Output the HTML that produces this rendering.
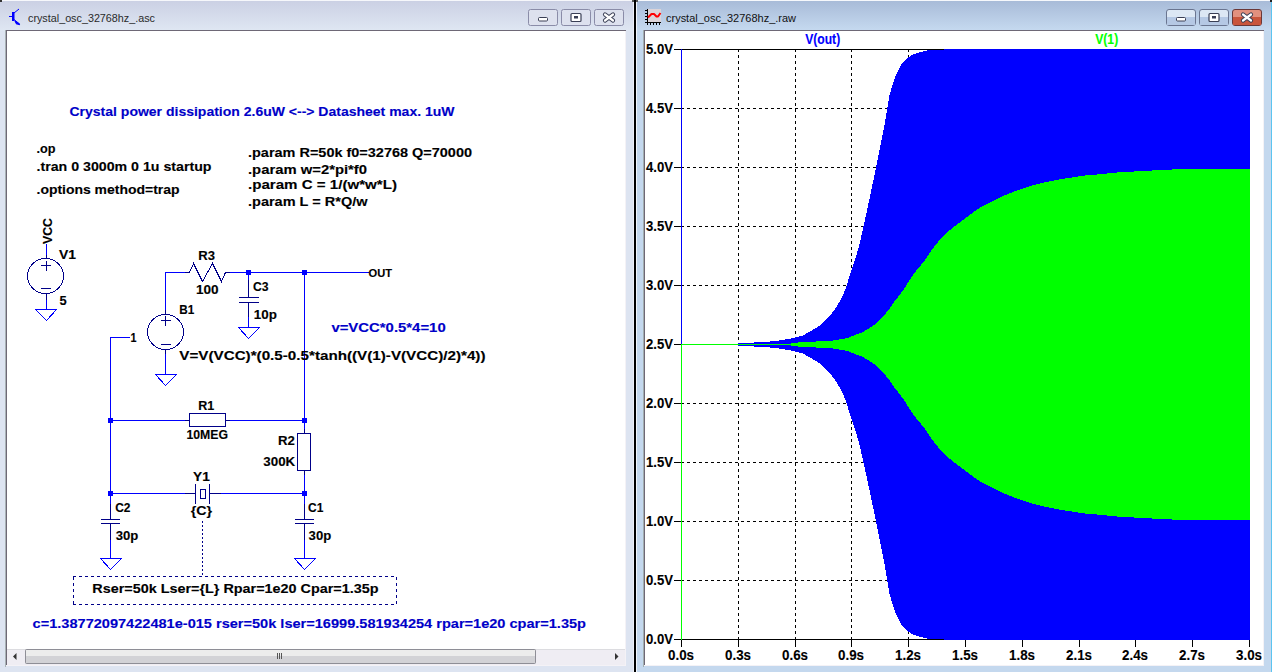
<!DOCTYPE html>
<html><head><meta charset="utf-8"><title>LTspice</title>
<style>html,body{margin:0;padding:0;width:1272px;height:672px;overflow:hidden;background:#d8deee;}
svg{display:block;}</style></head>
<body><svg width="1272" height="672" viewBox="0 0 1272 672">
<defs><linearGradient id="lg" x1="0" y1="0" x2="0" y2="1"><stop offset="0" stop-color="#cbd0e4"/><stop offset="1" stop-color="#dfe7f3"/></linearGradient><linearGradient id="rg" x1="0" y1="0" x2="0" y2="1"><stop offset="0" stop-color="#a8bbd8"/><stop offset="1" stop-color="#c6daf0"/></linearGradient></defs>
<rect x="0" y="0" width="634" height="672" fill="#dde4f1" />
<rect x="0" y="1" width="634" height="30" fill="url(#lg)" />
<rect x="0" y="0" width="634" height="1" fill="#f6f7fb" />
<rect x="0" y="0" width="2" height="2" fill="#333" />
<rect x="632" y="0" width="2" height="2" fill="#555" />
<rect x="634" y="0" width="2" height="672" fill="#000" />
<rect x="636" y="0" width="636" height="672" fill="#c4d8ee" />
<rect x="636" y="1" width="636" height="30" fill="url(#rg)" />
<rect x="636" y="0" width="636" height="1" fill="#f6f8fc" />
<rect x="636" y="0" width="2" height="2" fill="#555" />
<rect x="1270" y="0" width="2" height="2" fill="#222" />
<rect x="1271" y="2" width="1" height="670" fill="#5cc4f0" />
<rect x="636" y="2" width="1" height="670" fill="#f2f6fc" />
<rect x="5" y="30" width="1" height="637" fill="#a9b3b6" />
<rect x="643" y="30" width="1" height="637" fill="#a2aeb0" />
<rect x="6" y="30" width="620" height="1" fill="#6e6876" />
<rect x="6" y="30" width="1" height="636" fill="#6e6876" />
<rect x="7" y="31" width="618" height="618" fill="#fff" />
<rect x="625" y="31" width="1" height="635" fill="#f4f2f6" />
<rect x="6" y="665" width="620" height="1" fill="#f4f2f6" />
<rect x="633" y="2" width="1" height="670" fill="#eef0f8" />
<rect x="7" y="649" width="618" height="16" fill="#efedf3" />
<rect x="7" y="649" width="618" height="1" fill="#dcdce0" />
<rect x="25" y="649" width="511" height="15" fill="#8e8e96" rx="2"/>
<rect x="26" y="650" width="509" height="6" fill="#ececec" />
<rect x="26" y="656" width="509" height="7" fill="#d2d2d6" />
<rect x="277" y="653" width="1" height="6" fill="#555" />
<rect x="279" y="653" width="1" height="6" fill="#555" />
<rect x="281" y="653" width="1" height="6" fill="#555" />
<path d="M13 656.5 L16.5 653 L16.5 660 Z" fill="#333"/>
<path d="M615 653 L618.5 656.5 L615 660 Z" fill="#333"/>
<rect x="644" y="30" width="620" height="1" fill="#6e6876" />
<rect x="644" y="30" width="1" height="636" fill="#6e6876" />
<rect x="645" y="31" width="618" height="634" fill="#fff" />
<rect x="1263" y="31" width="1" height="635" fill="#f4f2f6" />
<rect x="644" y="665" width="620" height="1" fill="#f4f2f6" />
<text x="28" y="21.6" font-size="10.8" font-weight="normal" fill="#2a2a2a" font-family='"Liberation Sans", sans-serif' textLength="127" lengthAdjust="spacingAndGlyphs" word-spacing="0" letter-spacing="0" >crystal_osc_32768hz_.asc</text>
<text x="666" y="21.6" font-size="10.8" font-weight="normal" fill="#111" font-family='"Liberation Sans", sans-serif' textLength="130" lengthAdjust="spacingAndGlyphs" word-spacing="0" letter-spacing="0" >crystal_osc_32768hz_.raw</text>
<rect x="528.5" y="9.5" width="29" height="16" rx="2" fill="#dde1ee" stroke="#8a8ca8" stroke-width="1"/>
<rect x="561.5" y="9.5" width="29" height="16" rx="2" fill="#dde1ee" stroke="#8a8ca8" stroke-width="1"/>
<rect x="594.5" y="9.5" width="29" height="16" rx="2" fill="#dde1ee" stroke="#8a8ca8" stroke-width="1"/>
<rect x="538.5" y="17.5" width="9" height="3.5" fill="#fff" stroke="#3a3f55" rx="1"/>
<rect x="571" y="13.5" width="10" height="8" fill="#fff" stroke="#3a3f55" stroke-width="1.2" rx="1"/>
<rect x="574" y="16" width="4" height="2.5" fill="#3a3f55"/>
<path d="M605 14.5 L613 20.5 M613 14.5 L605 20.5" stroke="#3a3f55" stroke-width="4.2" stroke-linecap="round"/>
<path d="M605 14.5 L613 20.5 M613 14.5 L605 20.5" stroke="#fff" stroke-width="2.2" stroke-linecap="round"/>
<rect x="1166.5" y="9.5" width="29" height="16" rx="2.5" fill="#dce7f4" stroke="#6a7590" stroke-width="1"/>
<rect x="1167" y="17" width="28" height="8" fill="#b5c8e4"/>
<rect x="1199.5" y="9.5" width="29" height="16" rx="2.5" fill="#dce7f4" stroke="#6a7590" stroke-width="1"/>
<rect x="1200" y="17" width="28" height="8" fill="#b5c8e4"/>
<rect x="1232.5" y="9.5" width="29" height="16" rx="2.5" fill="#e2907e" stroke="#6a3838" stroke-width="1"/>
<rect x="1233" y="17" width="28" height="8" fill="#c9553c"/>
<rect x="1176.5" y="17.5" width="9" height="3.5" fill="#fff" stroke="#3a3f55" rx="1"/>
<rect x="1209" y="13.5" width="10" height="8" fill="#fff" stroke="#3a3f55" stroke-width="1.2" rx="1"/>
<rect x="1212" y="16" width="4" height="2.5" fill="#3a3f55"/>
<path d="M1243 14.5 L1251 20.5 M1251 14.5 L1243 20.5" stroke="#3a3f55" stroke-width="4.2" stroke-linecap="round"/>
<path d="M1243 14.5 L1251 20.5 M1251 14.5 L1243 20.5" stroke="#fff" stroke-width="2.2" stroke-linecap="round"/>
<g fill="#0000ff"><rect x="9" y="16" width="4" height="1"/><rect x="12" y="12" width="2.5" height="9"/></g>
<path d="M14 13 L19 9 M14 19.5 L19.5 24" stroke="#0000ff" stroke-width="1" fill="none"/>
<path d="M15 21 L19.8 24.6 L16.5 23.8 Z" stroke="#0000ff" stroke-width="1.2" fill="#0000ff"/>
<rect x="648" y="9" width="13" height="13" fill="#dcd4d8"/>
<g fill="#000"><rect x="647" y="9" width="1" height="15"/><rect x="645" y="22" width="16" height="1"/><rect x="645" y="10" width="2" height="1"/><rect x="645" y="13" width="2" height="1"/><rect x="645" y="16" width="2" height="1"/><rect x="645" y="19" width="2" height="1"/><rect x="647" y="23" width="1" height="2"/><rect x="650" y="23" width="1" height="2"/><rect x="653" y="23" width="1" height="2"/><rect x="656" y="23" width="1" height="2"/><rect x="659" y="23" width="1" height="2"/></g>
<path d="M648 17.5 L651.5 14 L654 14 L656.5 16.5 L658 16.5 L660.5 13" stroke="#f00" stroke-width="2" fill="none" stroke-linejoin="round"/>
<g>
<rect x="46" y="244" width="1" height="11" fill="#0000ff"/>
<rect x="46" y="255" width="1" height="4" fill="#000088"/>
<ellipse cx="45.5" cy="276" rx="18" ry="17.5" stroke="#000088" stroke-width="1" fill="none" shape-rendering="crispEdges"/>
<rect x="41" y="265" width="10" height="1" fill="#000088"/>
<rect x="46" y="261" width="1" height="10" fill="#000088"/>
<rect x="41" y="288" width="10" height="1" fill="#000088"/>
<rect x="46" y="294" width="1" height="6" fill="#000088"/>
<rect x="46" y="300" width="1" height="10" fill="#0000ff"/>
<rect x="35" y="309" width="22" height="1" fill="#0000ff"/>
<path d="M35.5 309.5 L46.5 320.5 L56.5 309.5" stroke="#0000ff" stroke-width="1" fill="none" shape-rendering="crispEdges"/>
<text x="0" y="0" font-size="12" font-weight="bold" fill="#000" stroke="#000" stroke-width="0.12" font-family='"Liberation Sans", sans-serif' textLength="26" lengthAdjust="spacingAndGlyphs" word-spacing="0" letter-spacing="0" transform="translate(51.6 244) rotate(-90)">VCC</text>
<text x="59" y="259" font-size="12" font-weight="bold" fill="#000" stroke="#000" stroke-width="0.12" font-family='"Liberation Sans", sans-serif' textLength="17" lengthAdjust="spacingAndGlyphs" word-spacing="0" letter-spacing="0" >V1</text>
<text x="59.6" y="304.6" font-size="12" font-weight="bold" fill="#000" stroke="#000" stroke-width="0.12" font-family='"Liberation Sans", sans-serif' textLength="7.2" lengthAdjust="spacingAndGlyphs" word-spacing="0" letter-spacing="0" >5</text>
<rect x="165" y="272" width="1" height="38" fill="#0000ff"/>
<rect x="165" y="310" width="1" height="4" fill="#000088"/>
<rect x="165" y="272" width="20" height="1" fill="#0000ff"/>
<rect x="185" y="272" width="5" height="1" fill="#000088"/>
<path d="M189.5 272.5 L193.5 263.5 L202.5 281.5 L212.5 263.5 L221.5 281.5 L225.5 272.5" stroke="#000088" stroke-width="1" fill="none" shape-rendering="crispEdges"/>
<rect x="225" y="272" width="5" height="1" fill="#000088"/>
<rect x="230" y="272" width="139" height="1" fill="#0000ff"/>
<rect x="246" y="270" width="5" height="5" fill="#0000ff"/>
<rect x="302" y="270" width="5" height="5" fill="#0000ff"/>
<rect x="248" y="272" width="1" height="8" fill="#0000ff"/>
<rect x="248" y="280" width="1" height="18" fill="#000088"/>
<rect x="239" y="297" width="20" height="1" fill="#000088"/>
<rect x="239" y="302" width="20" height="1" fill="#000088"/>
<rect x="248" y="302" width="1" height="15" fill="#000088"/>
<rect x="248" y="317" width="1" height="11" fill="#0000ff"/>
<rect x="238" y="327" width="22" height="1" fill="#0000ff"/>
<path d="M238.5 327.5 L248.5 338.5 L259.5 327.5" stroke="#0000ff" stroke-width="1" fill="none" shape-rendering="crispEdges"/>
<ellipse cx="165.5" cy="332" rx="18" ry="17.5" stroke="#000088" stroke-width="1" fill="none" shape-rendering="crispEdges"/>
<rect x="161" y="320" width="10" height="1" fill="#000088"/>
<rect x="165" y="316" width="1" height="10" fill="#000088"/>
<rect x="161" y="344" width="10" height="1" fill="#000088"/>
<rect x="165" y="350" width="1" height="4" fill="#000088"/>
<rect x="165" y="354" width="1" height="21" fill="#0000ff"/>
<rect x="155" y="374" width="22" height="1" fill="#0000ff"/>
<path d="M155.5 374.5 L165.5 385.5 L176.5 374.5" stroke="#0000ff" stroke-width="1" fill="none" shape-rendering="crispEdges"/>
<rect x="304" y="272" width="1" height="157" fill="#0000ff"/>
<rect x="304" y="429" width="1" height="5" fill="#000088"/>
<rect x="297" y="433" width="14" height="1" fill="#000088"/>
<rect x="297" y="470" width="14" height="1" fill="#000088"/>
<rect x="297" y="433" width="1" height="38" fill="#000088"/>
<rect x="310" y="433" width="1" height="38" fill="#000088"/>
<rect x="304" y="470" width="1" height="5" fill="#000088"/>
<rect x="304" y="475" width="1" height="19" fill="#0000ff"/>
<rect x="110" y="337" width="20" height="1" fill="#0000ff"/>
<rect x="110" y="337" width="1" height="157" fill="#0000ff"/>
<rect x="110" y="420" width="75" height="1" fill="#0000ff"/>
<rect x="185" y="420" width="5" height="1" fill="#000088"/>
<rect x="189" y="413" width="37" height="1" fill="#000088"/>
<rect x="189" y="426" width="37" height="1" fill="#000088"/>
<rect x="189" y="413" width="1" height="14" fill="#000088"/>
<rect x="225" y="413" width="1" height="14" fill="#000088"/>
<rect x="226" y="420" width="4" height="1" fill="#000088"/>
<rect x="230" y="420" width="75" height="1" fill="#0000ff"/>
<rect x="108" y="418" width="5" height="5" fill="#0000ff"/>
<rect x="302" y="418" width="5" height="5" fill="#0000ff"/>
<rect x="110" y="493" width="75" height="1" fill="#0000ff"/>
<rect x="185" y="493" width="11" height="1" fill="#000088"/>
<rect x="195" y="484" width="1" height="20" fill="#000088"/>
<rect x="209" y="484" width="1" height="20" fill="#000088"/>
<rect x="200" y="489" width="6" height="1" fill="#000088"/>
<rect x="200" y="498" width="6" height="1" fill="#000088"/>
<rect x="200" y="489" width="1" height="10" fill="#000088"/>
<rect x="205" y="489" width="1" height="10" fill="#000088"/>
<rect x="210" y="493" width="11" height="1" fill="#000088"/>
<rect x="221" y="493" width="84" height="1" fill="#0000ff"/>
<rect x="108" y="491" width="5" height="5" fill="#0000ff"/>
<rect x="302" y="491" width="5" height="5" fill="#0000ff"/>
<rect x="110" y="493" width="1" height="11" fill="#0000ff"/>
<rect x="110" y="504" width="1" height="16" fill="#000088"/>
<rect x="101" y="519" width="19" height="1" fill="#000088"/>
<rect x="101" y="523" width="19" height="1" fill="#000088"/>
<rect x="110" y="523" width="1" height="17" fill="#000088"/>
<rect x="110" y="540" width="1" height="19" fill="#0000ff"/>
<rect x="100" y="558" width="22" height="1" fill="#0000ff"/>
<path d="M100.5 558.5 L110.5 569.5 L121.5 558.5" stroke="#0000ff" stroke-width="1" fill="none" shape-rendering="crispEdges"/>
<rect x="304" y="493" width="1" height="11" fill="#0000ff"/>
<rect x="304" y="504" width="1" height="16" fill="#000088"/>
<rect x="295" y="519" width="19" height="1" fill="#000088"/>
<rect x="295" y="523" width="19" height="1" fill="#000088"/>
<rect x="304" y="523" width="1" height="17" fill="#000088"/>
<rect x="304" y="540" width="1" height="19" fill="#0000ff"/>
<rect x="294" y="558" width="22" height="1" fill="#0000ff"/>
<path d="M294.5 558.5 L304.5 569.5 L315.5 558.5" stroke="#0000ff" stroke-width="1" fill="none" shape-rendering="crispEdges"/>
<path d="M202.5 521 V577" stroke="#000088" stroke-width="1" stroke-dasharray="2 2" shape-rendering="crispEdges"/>
<path d="M73 576.5 H397 M73 604.5 H397 M73.5 577 V605 M396.5 577 V605" stroke="#000088" stroke-width="1" fill="none" stroke-dasharray="3 3" shape-rendering="crispEdges"/>
<text x="69.5" y="115.7" font-size="12" font-weight="bold" fill="#0000c8" stroke="#0000c8" stroke-width="0.12" font-family='"Liberation Sans", sans-serif' textLength="385" lengthAdjust="spacingAndGlyphs" word-spacing="0" letter-spacing="0" >Crystal power dissipation 2.6uW &lt;--&gt; Datasheet max. 1uW</text>
<text x="36.5" y="153.4" font-size="12" font-weight="bold" fill="#000" stroke="#000" stroke-width="0.12" font-family='"Liberation Sans", sans-serif' textLength="19" lengthAdjust="spacingAndGlyphs" word-spacing="0" letter-spacing="0" >.op</text>
<text x="36.5" y="171.1" font-size="12" font-weight="bold" fill="#000" stroke="#000" stroke-width="0.12" font-family='"Liberation Sans", sans-serif' textLength="175" lengthAdjust="spacingAndGlyphs" word-spacing="0" letter-spacing="0" >.tran 0 3000m 0 1u startup</text>
<text x="36.5" y="193.8" font-size="12" font-weight="bold" fill="#000" stroke="#000" stroke-width="0.12" font-family='"Liberation Sans", sans-serif' textLength="143" lengthAdjust="spacingAndGlyphs" word-spacing="0" letter-spacing="0" >.options method=trap</text>
<text x="248" y="157" font-size="12" font-weight="bold" fill="#000" stroke="#000" stroke-width="0.12" font-family='"Liberation Sans", sans-serif' textLength="224" lengthAdjust="spacingAndGlyphs" word-spacing="0" letter-spacing="0" >.param R=50k f0=32768 Q=70000</text>
<text x="248" y="173.5" font-size="12" font-weight="bold" fill="#000" stroke="#000" stroke-width="0.12" font-family='"Liberation Sans", sans-serif' textLength="119" lengthAdjust="spacingAndGlyphs" word-spacing="0" letter-spacing="0" >.param w=2*pi*f0</text>
<text x="248" y="189.2" font-size="12" font-weight="bold" fill="#000" stroke="#000" stroke-width="0.12" font-family='"Liberation Sans", sans-serif' textLength="149" lengthAdjust="spacingAndGlyphs" word-spacing="0" letter-spacing="0" >.param C = 1/(w*w*L)</text>
<text x="248" y="205.9" font-size="12" font-weight="bold" fill="#000" stroke="#000" stroke-width="0.12" font-family='"Liberation Sans", sans-serif' textLength="119.5" lengthAdjust="spacingAndGlyphs" word-spacing="0" letter-spacing="0" >.param L = R*Q/w</text>
<text x="198.3" y="260.2" font-size="12" font-weight="bold" fill="#000" stroke="#000" stroke-width="0.12" font-family='"Liberation Sans", sans-serif' textLength="16.7" lengthAdjust="spacingAndGlyphs" word-spacing="0" letter-spacing="0" >R3</text>
<text x="196" y="293.6" font-size="12" font-weight="bold" fill="#000" stroke="#000" stroke-width="0.12" font-family='"Liberation Sans", sans-serif' textLength="22.6" lengthAdjust="spacingAndGlyphs" word-spacing="0" letter-spacing="0" >100</text>
<text x="253" y="291.2" font-size="12" font-weight="bold" fill="#000" stroke="#000" stroke-width="0.12" font-family='"Liberation Sans", sans-serif' textLength="15.6" lengthAdjust="spacingAndGlyphs" word-spacing="0" letter-spacing="0" >C3</text>
<text x="253.8" y="319" font-size="12" font-weight="bold" fill="#000" stroke="#000" stroke-width="0.12" font-family='"Liberation Sans", sans-serif' textLength="23.1" lengthAdjust="spacingAndGlyphs" word-spacing="0" letter-spacing="0" >10p</text>
<text x="179.3" y="313.8" font-size="12" font-weight="bold" fill="#000" stroke="#000" stroke-width="0.12" font-family='"Liberation Sans", sans-serif' textLength="15" lengthAdjust="spacingAndGlyphs" word-spacing="0" letter-spacing="0" >B1</text>
<text x="179.3" y="360.4" font-size="12" font-weight="bold" fill="#000" stroke="#000" stroke-width="0.12" font-family='"Liberation Sans", sans-serif' textLength="306.2" lengthAdjust="spacingAndGlyphs" word-spacing="0" letter-spacing="0" >V=V(VCC)*(0.5-0.5*tanh((V(1)-V(VCC)/2)*4))</text>
<text x="368.6" y="276.8" font-size="11" font-weight="bold" fill="#000" stroke="#000" stroke-width="0.12" font-family='"Liberation Sans", sans-serif' textLength="23.5" lengthAdjust="spacingAndGlyphs" word-spacing="0" letter-spacing="0" >OUT</text>
<text x="331.4" y="331.8" font-size="12" font-weight="bold" fill="#0000c8" stroke="#0000c8" stroke-width="0.12" font-family='"Liberation Sans", sans-serif' textLength="114.3" lengthAdjust="spacingAndGlyphs" word-spacing="0" letter-spacing="0" >v=VCC*0.5*4=10</text>
<text x="130.5" y="341.9" font-size="12" font-weight="bold" fill="#000" stroke="#000" stroke-width="0.12" font-family='"Liberation Sans", sans-serif' textLength="6" lengthAdjust="spacingAndGlyphs" word-spacing="0" letter-spacing="0" >1</text>
<text x="198.3" y="409.8" font-size="12" font-weight="bold" fill="#000" stroke="#000" stroke-width="0.12" font-family='"Liberation Sans", sans-serif' textLength="16" lengthAdjust="spacingAndGlyphs" word-spacing="0" letter-spacing="0" >R1</text>
<text x="186.4" y="439" font-size="12" font-weight="bold" fill="#000" stroke="#000" stroke-width="0.12" font-family='"Liberation Sans", sans-serif' textLength="41.6" lengthAdjust="spacingAndGlyphs" word-spacing="0" letter-spacing="0" >10MEG</text>
<text x="278" y="445" font-size="12" font-weight="bold" fill="#000" stroke="#000" stroke-width="0.12" font-family='"Liberation Sans", sans-serif' textLength="16.8" lengthAdjust="spacingAndGlyphs" word-spacing="0" letter-spacing="0" >R2</text>
<text x="263.3" y="465.7" font-size="12" font-weight="bold" fill="#000" stroke="#000" stroke-width="0.12" font-family='"Liberation Sans", sans-serif' textLength="31.9" lengthAdjust="spacingAndGlyphs" word-spacing="0" letter-spacing="0" >300K</text>
<text x="193" y="481" font-size="12" font-weight="bold" fill="#000" stroke="#000" stroke-width="0.12" font-family='"Liberation Sans", sans-serif' textLength="16.8" lengthAdjust="spacingAndGlyphs" word-spacing="0" letter-spacing="0" >Y1</text>
<text x="190.7" y="514.5" font-size="12" font-weight="bold" fill="#000" stroke="#000" stroke-width="0.12" font-family='"Liberation Sans", sans-serif' textLength="21.4" lengthAdjust="spacingAndGlyphs" word-spacing="0" letter-spacing="0" >{C}</text>
<text x="115.2" y="512.4" font-size="12" font-weight="bold" fill="#000" stroke="#000" stroke-width="0.12" font-family='"Liberation Sans", sans-serif' textLength="15.3" lengthAdjust="spacingAndGlyphs" word-spacing="0" letter-spacing="0" >C2</text>
<text x="115.7" y="540" font-size="12" font-weight="bold" fill="#000" stroke="#000" stroke-width="0.12" font-family='"Liberation Sans", sans-serif' textLength="22.6" lengthAdjust="spacingAndGlyphs" word-spacing="0" letter-spacing="0" >30p</text>
<text x="308" y="512.4" font-size="12" font-weight="bold" fill="#000" stroke="#000" stroke-width="0.12" font-family='"Liberation Sans", sans-serif' textLength="15.3" lengthAdjust="spacingAndGlyphs" word-spacing="0" letter-spacing="0" >C1</text>
<text x="308.6" y="540" font-size="12" font-weight="bold" fill="#000" stroke="#000" stroke-width="0.12" font-family='"Liberation Sans", sans-serif' textLength="22.6" lengthAdjust="spacingAndGlyphs" word-spacing="0" letter-spacing="0" >30p</text>
<text x="92.3" y="593" font-size="12" font-weight="bold" fill="#000" stroke="#000" stroke-width="0.12" font-family='"Liberation Sans", sans-serif' textLength="286.2" lengthAdjust="spacingAndGlyphs" word-spacing="0" letter-spacing="0" >Rser=50k Lser={L} Rpar=1e20 Cpar=1.35p</text>
<text x="32.6" y="627.6" font-size="12" font-weight="bold" fill="#0000c8" stroke="#0000c8" stroke-width="0.12" font-family='"Liberation Sans", sans-serif' textLength="553.4" lengthAdjust="spacingAndGlyphs" word-spacing="0" letter-spacing="0" >c=1.38772097422481e-015 rser=50k lser=16999.581934254 rpar=1e20 cpar=1.35p</text>
</g>
<g>
<path d="M738.5 49 V639" stroke="#000" stroke-width="1" stroke-dasharray="3 3" shape-rendering="crispEdges"/>
<path d="M795.5 49 V639" stroke="#000" stroke-width="1" stroke-dasharray="3 3" shape-rendering="crispEdges"/>
<path d="M851.5 49 V639" stroke="#000" stroke-width="1" stroke-dasharray="3 3" shape-rendering="crispEdges"/>
<path d="M908.5 49 V639" stroke="#000" stroke-width="1" stroke-dasharray="3 3" shape-rendering="crispEdges"/>
<path d="M965.5 49 V639" stroke="#000" stroke-width="1" stroke-dasharray="3 3" shape-rendering="crispEdges"/>
<path d="M1022.5 49 V639" stroke="#000" stroke-width="1" stroke-dasharray="3 3" shape-rendering="crispEdges"/>
<path d="M1079.5 49 V639" stroke="#000" stroke-width="1" stroke-dasharray="3 3" shape-rendering="crispEdges"/>
<path d="M1135.5 49 V639" stroke="#000" stroke-width="1" stroke-dasharray="3 3" shape-rendering="crispEdges"/>
<path d="M1192.5 49 V639" stroke="#000" stroke-width="1" stroke-dasharray="3 3" shape-rendering="crispEdges"/>
<path d="M1249.5 49 V639" stroke="#000" stroke-width="1" stroke-dasharray="3 3" shape-rendering="crispEdges"/>
<path d="M681 108.5 H1250" stroke="#000" stroke-width="1" stroke-dasharray="3 3" shape-rendering="crispEdges"/>
<path d="M681 167.5 H1250" stroke="#000" stroke-width="1" stroke-dasharray="3 3" shape-rendering="crispEdges"/>
<path d="M681 226.5 H1250" stroke="#000" stroke-width="1" stroke-dasharray="3 3" shape-rendering="crispEdges"/>
<path d="M681 285.5 H1250" stroke="#000" stroke-width="1" stroke-dasharray="3 3" shape-rendering="crispEdges"/>
<path d="M681 344.5 H1250" stroke="#000" stroke-width="1" stroke-dasharray="3 3" shape-rendering="crispEdges"/>
<path d="M681 403.5 H1250" stroke="#000" stroke-width="1" stroke-dasharray="3 3" shape-rendering="crispEdges"/>
<path d="M681 462.5 H1250" stroke="#000" stroke-width="1" stroke-dasharray="3 3" shape-rendering="crispEdges"/>
<path d="M681 521.5 H1250" stroke="#000" stroke-width="1" stroke-dasharray="3 3" shape-rendering="crispEdges"/>
<path d="M681 580.5 H1250" stroke="#000" stroke-width="1" stroke-dasharray="3 3" shape-rendering="crispEdges"/>
<path d="M681 49.5 H1250 M681 639.5 H1250 M681.5 49 V640 M1249.5 49 V640" stroke="#000" stroke-width="1" fill="none" shape-rendering="crispEdges"/>
<path d="M674 49.5 H681" stroke="#000" stroke-width="1" shape-rendering="crispEdges"/>
<path d="M674 108.5 H681" stroke="#000" stroke-width="1" shape-rendering="crispEdges"/>
<path d="M674 167.5 H681" stroke="#000" stroke-width="1" shape-rendering="crispEdges"/>
<path d="M674 226.5 H681" stroke="#000" stroke-width="1" shape-rendering="crispEdges"/>
<path d="M674 285.5 H681" stroke="#000" stroke-width="1" shape-rendering="crispEdges"/>
<path d="M674 344.5 H681" stroke="#000" stroke-width="1" shape-rendering="crispEdges"/>
<path d="M674 403.5 H681" stroke="#000" stroke-width="1" shape-rendering="crispEdges"/>
<path d="M674 462.5 H681" stroke="#000" stroke-width="1" shape-rendering="crispEdges"/>
<path d="M674 521.5 H681" stroke="#000" stroke-width="1" shape-rendering="crispEdges"/>
<path d="M674 580.5 H681" stroke="#000" stroke-width="1" shape-rendering="crispEdges"/>
<path d="M674 639.5 H681" stroke="#000" stroke-width="1" shape-rendering="crispEdges"/>
<path d="M681.5 640 V647" stroke="#000" stroke-width="1" shape-rendering="crispEdges"/>
<path d="M738.5 640 V647" stroke="#000" stroke-width="1" shape-rendering="crispEdges"/>
<path d="M795.5 640 V647" stroke="#000" stroke-width="1" shape-rendering="crispEdges"/>
<path d="M851.5 640 V647" stroke="#000" stroke-width="1" shape-rendering="crispEdges"/>
<path d="M908.5 640 V647" stroke="#000" stroke-width="1" shape-rendering="crispEdges"/>
<path d="M965.5 640 V647" stroke="#000" stroke-width="1" shape-rendering="crispEdges"/>
<path d="M1022.5 640 V647" stroke="#000" stroke-width="1" shape-rendering="crispEdges"/>
<path d="M1079.5 640 V647" stroke="#000" stroke-width="1" shape-rendering="crispEdges"/>
<path d="M1135.5 640 V647" stroke="#000" stroke-width="1" shape-rendering="crispEdges"/>
<path d="M1192.5 640 V647" stroke="#000" stroke-width="1" shape-rendering="crispEdges"/>
<path d="M1249.5 640 V647" stroke="#000" stroke-width="1" shape-rendering="crispEdges"/>
<path d="M738 343 H739 H740 H741 H742 H743 H744 H745 H746 H747 H748 H749 H750 H751 H752 H753 H754 V342 H755 H756 H757 H758 H759 H760 H761 H762 H763 H764 H765 H766 H767 H768 H769 H770 V341 H771 H772 H773 H774 H775 H776 H777 H778 H779 V340 H780 H781 H782 H783 H784 H785 V339 H786 H787 H788 H789 H790 H791 V338 H792 H793 H794 H795 V337 H796 H797 H798 H799 V336 H800 H801 H802 H803 V335 H804 H805 V334 H806 V333 H807 H808 V332 H809 H810 V331 H811 H812 V330 H813 V329 H814 H815 V328 H816 H817 V327 H818 V326 H819 H820 V325 H821 V324 H822 V323 H823 V322 H824 V321 H825 V320 H826 V319 H827 V318 H828 V317 H829 V316 H830 V315 H831 V314 H832 V312 H833 V311 H834 V310 H835 V308 H836 V307 H837 V305 H838 V303 H839 V302 H840 V300 H841 V298 H842 V296 H843 V294 H844 V291 H845 V289 H846 V286 H847 V283 H848 V279 H849 V276 H850 V273 H851 V270 H852 V267 H853 V264 H854 V261 H855 V258 H856 V255 H857 V251 H858 V248 H859 V244 H860 V240 H861 V235 H862 V231 H863 V226 H864 V222 H865 V217 H866 V213 H867 V208 H868 V203 H869 V199 H870 V194 H871 V189 H872 V184 H873 V180 H874 V175 H875 V170 H876 V165 H877 V160 H878 V155 H879 V150 H880 V145 H881 V140 H882 V135 H883 V130 H884 V125 H885 V119 H886 V113 H887 V107 H888 V101 H889 V95 H890 V92 H891 V88 H892 V85 H893 V82 H894 V79 H895 V76 H896 V74 H897 V72 H898 V70 H899 V68 H900 V66 H901 V64 H902 V63 H903 V62 H904 V61 H905 V60 H906 V59 H907 V58 H908 V57 H909 H910 V56 H911 V55 H912 H913 V54 H914 H915 H916 V53 H917 H918 H919 V52 H920 H921 H922 H923 V51 H924 H925 H926 H927 V50 H928 H929 H930 H931 H932 H933 H934 H935 H936 H937 H938 H939 H940 H941 H942 H943 H944 V49 H945 H946 H947 H948 H949 H950 H951 H952 H953 H954 H955 H956 H957 H958 H959 H960 H961 H962 H963 H964 H965 H966 H967 H968 H969 H970 H971 H972 H973 H974 H975 H976 H977 H978 H979 H980 H981 H982 H983 H984 H985 H986 H987 H988 H989 H990 H991 H992 H993 H994 H995 H996 H997 H998 H999 H1000 H1001 H1002 H1003 H1004 H1005 H1006 H1007 H1008 H1009 H1010 H1011 H1012 H1013 H1014 H1015 H1016 H1017 H1018 H1019 H1020 H1021 H1022 H1023 H1024 H1025 H1026 H1027 H1028 H1029 H1030 H1031 H1032 H1033 H1034 H1035 H1036 H1037 H1038 H1039 H1040 H1041 H1042 H1043 H1044 H1045 H1046 H1047 H1048 H1049 H1050 H1051 H1052 H1053 H1054 H1055 H1056 H1057 H1058 H1059 H1060 H1061 H1062 H1063 H1064 H1065 H1066 H1067 H1068 H1069 H1070 H1071 H1072 H1073 H1074 H1075 H1076 H1077 H1078 H1079 H1080 H1081 H1082 H1083 H1084 H1085 H1086 H1087 H1088 H1089 H1090 H1091 H1092 H1093 H1094 H1095 H1096 H1097 H1098 H1099 H1100 H1101 H1102 H1103 H1104 H1105 H1106 H1107 H1108 H1109 H1110 H1111 H1112 H1113 H1114 H1115 H1116 H1117 H1118 H1119 H1120 H1121 H1122 H1123 H1124 H1125 H1126 H1127 H1128 H1129 H1130 H1131 H1132 H1133 H1134 H1135 H1136 H1137 H1138 H1139 H1140 H1141 H1142 H1143 H1144 H1145 H1146 H1147 H1148 H1149 H1150 H1151 H1152 H1153 H1154 H1155 H1156 H1157 H1158 H1159 H1160 H1161 H1162 H1163 H1164 H1165 H1166 H1167 H1168 H1169 H1170 H1171 H1172 H1173 H1174 H1175 H1176 H1177 H1178 H1179 H1180 H1181 H1182 H1183 H1184 H1185 H1186 H1187 H1188 H1189 H1190 H1191 H1192 H1193 H1194 H1195 H1196 H1197 H1198 H1199 H1200 H1201 H1202 H1203 H1204 H1205 H1206 H1207 H1208 H1209 H1210 H1211 H1212 H1213 H1214 H1215 H1216 H1217 H1218 H1219 H1220 H1221 H1222 H1223 H1224 H1225 H1226 H1227 H1228 H1229 H1230 H1231 H1232 H1233 H1234 H1235 H1236 H1237 H1238 H1239 H1240 H1241 H1242 H1243 H1244 H1245 H1246 H1247 H1248 H1249 H1250 V640 H1249 H1248 H1247 H1246 H1245 H1244 H1243 H1242 H1241 H1240 H1239 H1238 H1237 H1236 H1235 H1234 H1233 H1232 H1231 H1230 H1229 H1228 H1227 H1226 H1225 H1224 H1223 H1222 H1221 H1220 H1219 H1218 H1217 H1216 H1215 H1214 H1213 H1212 H1211 H1210 H1209 H1208 H1207 H1206 H1205 H1204 H1203 H1202 H1201 H1200 H1199 H1198 H1197 H1196 H1195 H1194 H1193 H1192 H1191 H1190 H1189 H1188 H1187 H1186 H1185 H1184 H1183 H1182 H1181 H1180 H1179 H1178 H1177 H1176 H1175 H1174 H1173 H1172 H1171 H1170 H1169 H1168 H1167 H1166 H1165 H1164 H1163 H1162 H1161 H1160 H1159 H1158 H1157 H1156 H1155 H1154 H1153 H1152 H1151 H1150 H1149 H1148 H1147 H1146 H1145 H1144 H1143 H1142 H1141 H1140 H1139 H1138 H1137 H1136 H1135 H1134 H1133 H1132 H1131 H1130 H1129 H1128 H1127 H1126 H1125 H1124 H1123 H1122 H1121 H1120 H1119 H1118 H1117 H1116 H1115 H1114 H1113 H1112 H1111 H1110 H1109 H1108 H1107 H1106 H1105 H1104 H1103 H1102 H1101 H1100 H1099 H1098 H1097 H1096 H1095 H1094 H1093 H1092 H1091 H1090 H1089 H1088 H1087 H1086 H1085 H1084 H1083 H1082 H1081 H1080 H1079 H1078 H1077 H1076 H1075 H1074 H1073 H1072 H1071 H1070 H1069 H1068 H1067 H1066 H1065 H1064 H1063 H1062 H1061 H1060 H1059 H1058 H1057 H1056 H1055 H1054 H1053 H1052 H1051 H1050 H1049 H1048 H1047 H1046 H1045 H1044 H1043 H1042 H1041 H1040 H1039 H1038 H1037 H1036 H1035 H1034 H1033 H1032 H1031 H1030 H1029 H1028 H1027 H1026 H1025 H1024 H1023 H1022 H1021 H1020 H1019 H1018 H1017 H1016 H1015 H1014 H1013 H1012 H1011 H1010 H1009 H1008 H1007 H1006 H1005 H1004 H1003 H1002 H1001 H1000 H999 H998 H997 H996 H995 H994 H993 H992 H991 H990 H989 H988 H987 H986 H985 H984 H983 H982 H981 H980 H979 H978 H977 H976 H975 H974 H973 H972 H971 H970 H969 H968 H967 H966 H965 H964 H963 H962 H961 H960 H959 H958 H957 H956 H955 H954 H953 H952 H951 H950 H949 H948 H947 H946 H945 H944 V639 H943 H942 H941 H940 H939 H938 H937 H936 H935 H934 H933 H932 H931 H930 H929 H928 H927 V638 H926 H925 H924 H923 V637 H922 H921 H920 H919 V636 H918 H917 H916 V635 H915 H914 H913 V634 H912 H911 V633 H910 V632 H909 H908 V631 H907 V630 H906 V629 H905 V628 H904 V627 H903 V626 H902 V625 H901 V623 H900 V621 H899 V619 H898 V617 H897 V615 H896 V613 H895 V610 H894 V607 H893 V604 H892 V601 H891 V597 H890 V594 H889 V588 H888 V582 H887 V576 H886 V570 H885 V564 H884 V559 H883 V554 H882 V549 H881 V544 H880 V539 H879 V534 H878 V529 H877 V524 H876 V519 H875 V514 H874 V509 H873 V505 H872 V500 H871 V495 H870 V490 H869 V486 H868 V481 H867 V476 H866 V472 H865 V467 H864 V463 H863 V458 H862 V454 H861 V449 H860 V445 H859 V441 H858 V438 H857 V434 H856 V431 H855 V428 H854 V425 H853 V422 H852 V419 H851 V416 H850 V413 H849 V410 H848 V406 H847 V403 H846 V400 H845 V398 H844 V395 H843 V393 H842 V391 H841 V389 H840 V387 H839 V386 H838 V384 H837 V382 H836 V381 H835 V379 H834 V378 H833 V377 H832 V375 H831 V374 H830 V373 H829 V372 H828 V371 H827 V370 H826 V369 H825 V368 H824 V367 H823 V366 H822 V365 H821 V364 H820 V363 H819 H818 V362 H817 V361 H816 H815 V360 H814 H813 V359 H812 V358 H811 H810 V357 H809 H808 V356 H807 H806 V355 H805 V354 H804 H803 V353 H802 H801 H800 H799 V352 H798 H797 H796 H795 V351 H794 H793 H792 H791 V350 H790 H789 H788 H787 H786 H785 V349 H784 H783 H782 H781 H780 H779 V348 H778 H777 H776 H775 H774 H773 H772 H771 H770 V347 H769 H768 H767 H766 H765 H764 H763 H762 H761 H760 H759 H758 H757 H756 H755 H754 V346 H753 H752 H751 H750 H749 H748 H747 H746 H745 H744 H743 H742 H741 H740 H739 H738 Z" fill="#0000ff" shape-rendering="crispEdges"/>
<path d="M791 343 H792 H793 H794 H795 H796 H797 H798 V342 H799 H800 H801 H802 H803 H804 H805 H806 H807 H808 H809 H810 H811 H812 H813 H814 H815 H816 V341 H817 H818 H819 H820 H821 H822 H823 H824 H825 H826 H827 H828 H829 H830 H831 H832 H833 V340 H834 H835 H836 H837 H838 H839 V339 H840 H841 H842 H843 H844 H845 V338 H846 H847 H848 H849 V337 H850 H851 V336 H852 H853 H854 V335 H855 H856 V334 H857 H858 H859 V333 H860 H861 H862 V332 H863 H864 V331 H865 V330 H866 H867 V329 H868 H869 V328 H870 V327 H871 H872 V326 H873 V325 H874 H875 V324 H876 V323 H877 V322 H878 V321 H879 V320 H880 V319 H881 V318 H882 V317 H883 V316 H884 V315 H885 V314 H886 V312 H887 V311 H888 V310 H889 V309 H890 V307 H891 V306 H892 V304 H893 V303 H894 V301 H895 V300 H896 V299 H897 V298 H898 V296 H899 V295 H900 V294 H901 V292 H902 V291 H903 V290 H904 V288 H905 V287 H906 V285 H907 V283 H908 V282 H909 V280 H910 V279 H911 V277 H912 V276 H913 V274 H914 V273 H915 V272 H916 V270 H917 V269 H918 V268 H919 V267 H920 V266 H921 V264 H922 V263 H923 V262 H924 V261 H925 V259 H926 V258 H927 V256 H928 V255 H929 V253 H930 V252 H931 V250 H932 V249 H933 V248 H934 V246 H935 V245 H936 V244 H937 V243 H938 V241 H939 V240 H940 V239 H941 V238 H942 V237 H943 V236 H944 V235 H945 V234 H946 V233 H947 V232 H948 V231 H949 V230 H950 H951 V229 H952 V228 H953 V227 H954 V226 H955 H956 V225 H957 V224 H958 V223 H959 H960 V222 H961 V221 H962 V220 H963 H964 V219 H965 V218 H966 V217 H967 H968 V216 H969 V215 H970 V214 H971 H972 V213 H973 V212 H974 V211 H975 H976 V210 H977 V209 H978 H979 V208 H980 V207 H981 H982 V206 H983 H984 V205 H985 H986 V204 H987 H988 V203 H989 H990 V202 H991 H992 V201 H993 H994 V200 H995 H996 V199 H997 H998 V198 H999 H1000 V197 H1001 H1002 V196 H1003 H1004 V195 H1005 H1006 H1007 V194 H1008 H1009 V193 H1010 H1011 H1012 V192 H1013 H1014 V191 H1015 H1016 H1017 V190 H1018 H1019 H1020 V189 H1021 H1022 H1023 V188 H1024 H1025 H1026 V187 H1027 H1028 H1029 V186 H1030 H1031 H1032 V185 H1033 H1034 H1035 H1036 V184 H1037 H1038 H1039 H1040 V183 H1041 H1042 H1043 H1044 V182 H1045 H1046 H1047 H1048 H1049 V181 H1050 H1051 H1052 H1053 H1054 V180 H1055 H1056 H1057 H1058 H1059 V179 H1060 H1061 H1062 H1063 H1064 H1065 V178 H1066 H1067 H1068 H1069 H1070 H1071 H1072 V177 H1073 H1074 H1075 H1076 H1077 H1078 V176 H1079 H1080 H1081 H1082 H1083 H1084 H1085 V175 H1086 H1087 H1088 H1089 H1090 H1091 H1092 H1093 H1094 H1095 H1096 H1097 V174 H1098 H1099 H1100 H1101 H1102 H1103 H1104 H1105 H1106 H1107 V173 H1108 H1109 H1110 H1111 H1112 H1113 H1114 H1115 H1116 H1117 V172 H1118 H1119 H1120 H1121 H1122 H1123 H1124 H1125 H1126 H1127 H1128 H1129 H1130 H1131 H1132 H1133 H1134 V171 H1135 H1136 H1137 H1138 H1139 H1140 H1141 H1142 H1143 H1144 H1145 H1146 H1147 H1148 H1149 H1150 H1151 H1152 V170 H1153 H1154 H1155 H1156 H1157 H1158 H1159 H1160 H1161 H1162 H1163 H1164 H1165 H1166 H1167 H1168 H1169 H1170 H1171 H1172 V169 H1173 H1174 H1175 H1176 H1177 H1178 H1179 H1180 H1181 H1182 H1183 H1184 H1185 H1186 H1187 H1188 H1189 H1190 H1191 H1192 H1193 H1194 H1195 H1196 H1197 H1198 H1199 H1200 H1201 H1202 H1203 H1204 H1205 H1206 H1207 H1208 H1209 H1210 H1211 H1212 H1213 H1214 H1215 H1216 H1217 H1218 H1219 H1220 H1221 H1222 H1223 H1224 H1225 H1226 H1227 H1228 H1229 H1230 H1231 H1232 H1233 H1234 H1235 H1236 H1237 H1238 H1239 H1240 H1241 H1242 H1243 H1244 H1245 H1246 H1247 H1248 H1249 H1250 V520 H1249 H1248 H1247 H1246 H1245 H1244 H1243 H1242 H1241 H1240 H1239 H1238 H1237 H1236 H1235 H1234 H1233 H1232 H1231 H1230 H1229 H1228 H1227 H1226 H1225 H1224 H1223 H1222 H1221 H1220 H1219 H1218 H1217 H1216 H1215 H1214 H1213 H1212 H1211 H1210 H1209 H1208 H1207 H1206 H1205 H1204 H1203 H1202 H1201 H1200 H1199 H1198 H1197 H1196 H1195 H1194 H1193 H1192 H1191 H1190 H1189 H1188 H1187 H1186 H1185 H1184 H1183 H1182 H1181 H1180 H1179 H1178 H1177 H1176 H1175 H1174 H1173 H1172 V519 H1171 H1170 H1169 H1168 H1167 H1166 H1165 H1164 H1163 H1162 H1161 H1160 H1159 H1158 H1157 H1156 H1155 H1154 H1153 H1152 V518 H1151 H1150 H1149 H1148 H1147 H1146 H1145 H1144 H1143 H1142 H1141 H1140 H1139 H1138 H1137 H1136 H1135 H1134 V517 H1133 H1132 H1131 H1130 H1129 H1128 H1127 H1126 H1125 H1124 H1123 H1122 H1121 H1120 H1119 H1118 H1117 V516 H1116 H1115 H1114 H1113 H1112 H1111 H1110 H1109 H1108 H1107 V515 H1106 H1105 H1104 H1103 H1102 H1101 H1100 H1099 H1098 H1097 V514 H1096 H1095 H1094 H1093 H1092 H1091 H1090 H1089 H1088 H1087 H1086 H1085 V513 H1084 H1083 H1082 H1081 H1080 H1079 H1078 V512 H1077 H1076 H1075 H1074 H1073 H1072 V511 H1071 H1070 H1069 H1068 H1067 H1066 H1065 V510 H1064 H1063 H1062 H1061 H1060 H1059 V509 H1058 H1057 H1056 H1055 H1054 V508 H1053 H1052 H1051 H1050 H1049 V507 H1048 H1047 H1046 H1045 H1044 V506 H1043 H1042 H1041 H1040 V505 H1039 H1038 H1037 H1036 V504 H1035 H1034 H1033 H1032 V503 H1031 H1030 H1029 V502 H1028 H1027 H1026 V501 H1025 H1024 H1023 V500 H1022 H1021 H1020 V499 H1019 H1018 H1017 V498 H1016 H1015 H1014 V497 H1013 H1012 V496 H1011 H1010 H1009 V495 H1008 H1007 V494 H1006 H1005 H1004 V493 H1003 H1002 V492 H1001 H1000 V491 H999 H998 V490 H997 H996 V489 H995 H994 V488 H993 H992 V487 H991 H990 V486 H989 H988 V485 H987 H986 V484 H985 H984 V483 H983 H982 V482 H981 H980 V481 H979 V480 H978 H977 V479 H976 V478 H975 H974 V477 H973 V476 H972 V475 H971 H970 V474 H969 V473 H968 V472 H967 H966 V471 H965 V470 H964 V469 H963 H962 V468 H961 V467 H960 V466 H959 H958 V465 H957 V464 H956 V463 H955 H954 V462 H953 V461 H952 V460 H951 V459 H950 H949 V458 H948 V457 H947 V456 H946 V455 H945 V454 H944 V453 H943 V452 H942 V451 H941 V450 H940 V449 H939 V448 H938 V446 H937 V445 H936 V444 H935 V443 H934 V441 H933 V440 H932 V439 H931 V437 H930 V436 H929 V434 H928 V433 H927 V431 H926 V430 H925 V428 H924 V427 H923 V426 H922 V425 H921 V423 H920 V422 H919 V421 H918 V420 H917 V419 H916 V417 H915 V416 H914 V415 H913 V413 H912 V412 H911 V410 H910 V409 H909 V407 H908 V406 H907 V404 H906 V402 H905 V401 H904 V399 H903 V398 H902 V397 H901 V395 H900 V394 H899 V393 H898 V391 H897 V390 H896 V389 H895 V388 H894 V386 H893 V385 H892 V383 H891 V382 H890 V380 H889 V379 H888 V378 H887 V377 H886 V375 H885 V374 H884 V373 H883 V372 H882 V371 H881 V370 H880 V369 H879 V368 H878 V367 H877 V366 H876 V365 H875 V364 H874 H873 V363 H872 V362 H871 H870 V361 H869 V360 H868 H867 V359 H866 H865 V358 H864 V357 H863 H862 V356 H861 H860 H859 V355 H858 H857 H856 V354 H855 H854 V353 H853 H852 H851 V352 H850 H849 V351 H848 H847 H846 H845 V350 H844 H843 H842 H841 H840 H839 V349 H838 H837 H836 H835 H834 H833 V348 H832 H831 H830 H829 H828 H827 H826 H825 H824 H823 H822 H821 H820 H819 H818 H817 H816 V347 H815 H814 H813 H812 H811 H810 H809 H808 H807 H806 H805 H804 H803 H802 H801 H800 H799 H798 V346 H797 H796 H795 H794 H793 H792 H791 Z" fill="#00ff00" shape-rendering="crispEdges"/>
<path d="M681 344.5 H791" stroke="#00ff00" stroke-width="1" shape-rendering="crispEdges"/>
<path d="M681.5 49 V344" stroke="#0000ff" stroke-width="1" shape-rendering="crispEdges"/>
<path d="M681.5 344 V640" stroke="#00ff00" stroke-width="1" shape-rendering="crispEdges"/>
<text x="646" y="54.2" font-size="14.5" font-weight="bold" fill="#000" stroke="#000" stroke-width="0.12" font-family='"Liberation Sans", sans-serif' textLength="27" lengthAdjust="spacingAndGlyphs" word-spacing="0" letter-spacing="0" >5.0V</text>
<text x="646" y="113.2" font-size="14.5" font-weight="bold" fill="#000" stroke="#000" stroke-width="0.12" font-family='"Liberation Sans", sans-serif' textLength="27" lengthAdjust="spacingAndGlyphs" word-spacing="0" letter-spacing="0" >4.5V</text>
<text x="646" y="172.2" font-size="14.5" font-weight="bold" fill="#000" stroke="#000" stroke-width="0.12" font-family='"Liberation Sans", sans-serif' textLength="27" lengthAdjust="spacingAndGlyphs" word-spacing="0" letter-spacing="0" >4.0V</text>
<text x="646" y="231.2" font-size="14.5" font-weight="bold" fill="#000" stroke="#000" stroke-width="0.12" font-family='"Liberation Sans", sans-serif' textLength="27" lengthAdjust="spacingAndGlyphs" word-spacing="0" letter-spacing="0" >3.5V</text>
<text x="646" y="290.2" font-size="14.5" font-weight="bold" fill="#000" stroke="#000" stroke-width="0.12" font-family='"Liberation Sans", sans-serif' textLength="27" lengthAdjust="spacingAndGlyphs" word-spacing="0" letter-spacing="0" >3.0V</text>
<text x="646" y="349.2" font-size="14.5" font-weight="bold" fill="#000" stroke="#000" stroke-width="0.12" font-family='"Liberation Sans", sans-serif' textLength="27" lengthAdjust="spacingAndGlyphs" word-spacing="0" letter-spacing="0" >2.5V</text>
<text x="646" y="408.2" font-size="14.5" font-weight="bold" fill="#000" stroke="#000" stroke-width="0.12" font-family='"Liberation Sans", sans-serif' textLength="27" lengthAdjust="spacingAndGlyphs" word-spacing="0" letter-spacing="0" >2.0V</text>
<text x="646" y="467.2" font-size="14.5" font-weight="bold" fill="#000" stroke="#000" stroke-width="0.12" font-family='"Liberation Sans", sans-serif' textLength="27" lengthAdjust="spacingAndGlyphs" word-spacing="0" letter-spacing="0" >1.5V</text>
<text x="646" y="526.2" font-size="14.5" font-weight="bold" fill="#000" stroke="#000" stroke-width="0.12" font-family='"Liberation Sans", sans-serif' textLength="27" lengthAdjust="spacingAndGlyphs" word-spacing="0" letter-spacing="0" >1.0V</text>
<text x="646" y="585.2" font-size="14.5" font-weight="bold" fill="#000" stroke="#000" stroke-width="0.12" font-family='"Liberation Sans", sans-serif' textLength="27" lengthAdjust="spacingAndGlyphs" word-spacing="0" letter-spacing="0" >0.5V</text>
<text x="646" y="644.2" font-size="14.5" font-weight="bold" fill="#000" stroke="#000" stroke-width="0.12" font-family='"Liberation Sans", sans-serif' textLength="27" lengthAdjust="spacingAndGlyphs" word-spacing="0" letter-spacing="0" >0.0V</text>
<text x="668" y="659.8" font-size="14.5" font-weight="bold" fill="#000" stroke="#000" stroke-width="0.12" font-family='"Liberation Sans", sans-serif' textLength="26" lengthAdjust="spacingAndGlyphs" word-spacing="0" letter-spacing="0" >0.0s</text>
<text x="725" y="659.8" font-size="14.5" font-weight="bold" fill="#000" stroke="#000" stroke-width="0.12" font-family='"Liberation Sans", sans-serif' textLength="26" lengthAdjust="spacingAndGlyphs" word-spacing="0" letter-spacing="0" >0.3s</text>
<text x="782" y="659.8" font-size="14.5" font-weight="bold" fill="#000" stroke="#000" stroke-width="0.12" font-family='"Liberation Sans", sans-serif' textLength="26" lengthAdjust="spacingAndGlyphs" word-spacing="0" letter-spacing="0" >0.6s</text>
<text x="838" y="659.8" font-size="14.5" font-weight="bold" fill="#000" stroke="#000" stroke-width="0.12" font-family='"Liberation Sans", sans-serif' textLength="26" lengthAdjust="spacingAndGlyphs" word-spacing="0" letter-spacing="0" >0.9s</text>
<text x="895" y="659.8" font-size="14.5" font-weight="bold" fill="#000" stroke="#000" stroke-width="0.12" font-family='"Liberation Sans", sans-serif' textLength="26" lengthAdjust="spacingAndGlyphs" word-spacing="0" letter-spacing="0" >1.2s</text>
<text x="952" y="659.8" font-size="14.5" font-weight="bold" fill="#000" stroke="#000" stroke-width="0.12" font-family='"Liberation Sans", sans-serif' textLength="26" lengthAdjust="spacingAndGlyphs" word-spacing="0" letter-spacing="0" >1.5s</text>
<text x="1009" y="659.8" font-size="14.5" font-weight="bold" fill="#000" stroke="#000" stroke-width="0.12" font-family='"Liberation Sans", sans-serif' textLength="26" lengthAdjust="spacingAndGlyphs" word-spacing="0" letter-spacing="0" >1.8s</text>
<text x="1066" y="659.8" font-size="14.5" font-weight="bold" fill="#000" stroke="#000" stroke-width="0.12" font-family='"Liberation Sans", sans-serif' textLength="26" lengthAdjust="spacingAndGlyphs" word-spacing="0" letter-spacing="0" >2.1s</text>
<text x="1122" y="659.8" font-size="14.5" font-weight="bold" fill="#000" stroke="#000" stroke-width="0.12" font-family='"Liberation Sans", sans-serif' textLength="26" lengthAdjust="spacingAndGlyphs" word-spacing="0" letter-spacing="0" >2.4s</text>
<text x="1179" y="659.8" font-size="14.5" font-weight="bold" fill="#000" stroke="#000" stroke-width="0.12" font-family='"Liberation Sans", sans-serif' textLength="26" lengthAdjust="spacingAndGlyphs" word-spacing="0" letter-spacing="0" >2.7s</text>
<text x="1236" y="659.8" font-size="14.5" font-weight="bold" fill="#000" stroke="#000" stroke-width="0.12" font-family='"Liberation Sans", sans-serif' textLength="26" lengthAdjust="spacingAndGlyphs" word-spacing="0" letter-spacing="0" >3.0s</text>
<text x="805.2" y="43.8" font-size="14" font-weight="bold" fill="#0000ff" stroke="#0000ff" stroke-width="0.12" font-family='"Liberation Sans", sans-serif' textLength="35" lengthAdjust="spacingAndGlyphs" word-spacing="0" letter-spacing="0" >V(out)</text>
<text x="1095.2" y="43.8" font-size="14" font-weight="bold" fill="#00ff00" stroke="#00ff00" stroke-width="0.12" font-family='"Liberation Sans", sans-serif' textLength="23" lengthAdjust="spacingAndGlyphs" word-spacing="0" letter-spacing="0" >V(1)</text>
</g>
</svg></body></html>
